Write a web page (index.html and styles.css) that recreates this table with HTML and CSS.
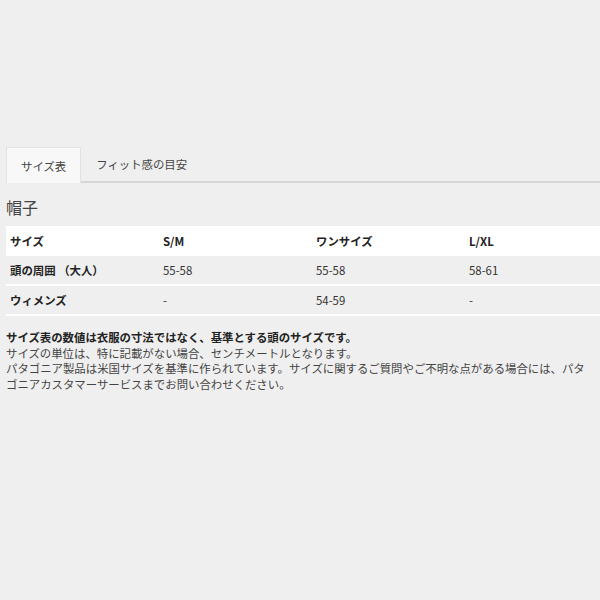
FILE: index.html
```html
<!DOCTYPE html>
<html lang="ja">
<head>
    <meta charset="UTF-8">
    <title>サイズ表</title>
    <link rel="stylesheet" href="styles.css">
</head>
<body>
    <div class="container">
        <div class="tabs">
            <div class="tab active">サイズ表</div>
            <div class="tab">フィット感の目安</div>
            <div class="tab-rest"></div>
        </div>
        <h2 class="title">帽子</h2>
        <table class="size-table">
            <tr class="head">
                <th>サイズ</th>
                <th>S/M</th>
                <th>ワンサイズ</th>
                <th>L/XL</th>
            </tr>
            <tr>
                <td class="label">頭の周囲 （大人）</td>
                <td>55-58</td>
                <td>55-58</td>
                <td>58-61</td>
            </tr>
            <tr>
                <td class="label">ウィメンズ</td>
                <td>-</td>
                <td>54-59</td>
                <td>-</td>
            </tr>
        </table>
        <div class="notes">
            <p class="strong">サイズ表の数値は衣服の寸法ではなく、基準とする頭のサイズです。</p>
            <p>サイズの単位は、特に記載がない場合、センチメートルとなります。</p>
            <p>パタゴニア製品は米国サイズを基準に作られています。サイズに関するご質問やご不明な点がある場合には、パタゴニアカスタマーサービスまでお問い合わせください。</p>
        </div>
    </div>
</body>
</html>
```

FILE: styles.css
```css
html, body {
    margin: 0;
    background: #efefef;
}
body {
    font-family: "Noto Sans CJK JP", "Noto Sans", sans-serif;
    color: #333;
    font-size: 11.4px;
}
.container {
    padding: 147px 0 0 6px;
}
.tabs {
    display: flex;
    height: 36px;
}
.tab {
    padding: 0 15px;
    display: flex;
    align-items: center;
    white-space: nowrap;
    color: #444;
    border-bottom: 2px solid #d6d6d6;
}
.tab.active {
    background: #f8f8f8;
    border: 1px solid #e2e2e2;
    border-bottom: none;
    padding: 0 14px;
}
.tab-rest {
    flex: 1;
    border-bottom: 2px solid #d6d6d6;
}
.title {
    font-size: 16px;
    font-weight: normal;
    color: #444;
    margin: 12px 0 7px;
}
.size-table {
    width: 594px;
    border-collapse: collapse;
    table-layout: fixed;
}
.size-table th,
.size-table td {
    text-align: left;
    padding: 0 0 0 4px;
    width: 149px;
}
.size-table th:last-child,
.size-table td:last-child {
    width: auto;
}
.size-table .head {
    background: #fff;
    height: 30px;
}
.size-table th {
    font-weight: bold;
    color: #222;
}
.size-table td {
    height: 28px;
    border-bottom: 2px solid #fff;
}
.size-table td.label {
    font-weight: bold;
    color: #222;
}
.notes {
    margin-top: 14px;
    padding-right: 6px;
    line-height: 15.5px;
    color: #444;
}
.notes p {
    margin: 0;
}
.notes .strong {
    font-weight: bold;
    color: #222;
}
```
